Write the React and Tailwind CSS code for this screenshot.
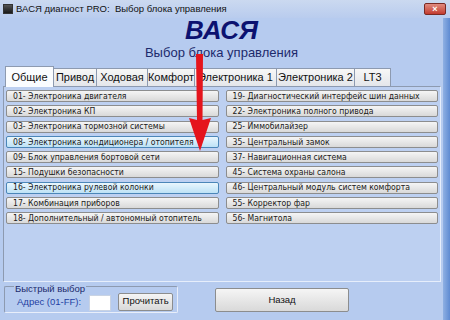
const leftRows = [
  { label: "01- Электроника двигателя" },
  { label: "02- Электроника КП" },
  { label: "03- Электроника тормозной системы" },
  { label: "08- Электроника кондиционера / отопителя", active: true },
  { label: "09- Блок управления бортовой сети" },
  { label: "15- Подушки безопасности" },
  { label: "16- Электроника рулевой колонки", active: true },
  { label: "17- Комбинация приборов" },
  { label: "18- Дополнительный / автономный отопитель" },
];

const rightRows = [
  { label: "19- Диагностический интерфейс шин данных" },
  { label: "22- Электроника полного привода" },
  { label: "25- Иммобилайзер" },
  { label: "35- Центральный замок" },
  { label: "37- Навигационная система" },
  { label: "45- Система охраны салона" },
  { label: "46- Центральный модуль систем комфорта" },
  { label: "55- Корректор фар" },
  { label: "56- Магнитола" },
];

const tabs = [
  { label: "Общие", w: "w-[49px]", active: true },
  { label: "Привод", w: "w-[43px]" },
  { label: "Ходовая", w: "w-[51px]" },
  { label: "Комфорт", w: "w-[47px]" },
  { label: "Электроника 1", w: "w-[82px]" },
  { label: "Электроника 2", w: "w-[78px]" },
  { label: "LT3", w: "w-[36px]" },
];

const RowButton = ({ label, active }) => (
  <div
    className={
      active
        ? "h-[12px] flex items-center pl-[6px] rounded-[2px] border border-[#4b86b8] bg-gradient-to-b from-[#e9f6fd] to-[#bde2f6] font-['DejaVu_Sans_Condensed','Liberation_Sans',sans-serif] text-[8.6px] leading-none text-[#1a1a1a] whitespace-nowrap overflow-hidden"
        : "h-[12px] flex items-center pl-[6px] rounded-[2px] border border-[#8c8d8e] bg-gradient-to-b from-[#f5f5f5] to-[#d9d9d9] font-['DejaVu_Sans_Condensed','Liberation_Sans',sans-serif] text-[8.6px] leading-none text-[#1a1a1a] whitespace-nowrap overflow-hidden"
    }
  >
    {label}
  </div>
);

export default function App() {
  return (
    <div className="w-[450px] h-[320px] relative overflow-hidden bg-[#b6cbef] font-['Liberation_Sans',sans-serif] flex flex-col">
      {/* title bar */}
      <div className="h-[18px] flex items-center pl-[3px] pr-[4px] bg-gradient-to-b from-[#cbd9f0] to-[#b9ccee]">
        <div className="w-[10px] h-[10px] bg-gradient-to-b from-[#555] to-[#1a1a1a] border border-[#333]" />
        <span className="ml-[3px] text-[9.5px] text-[#111] whitespace-pre">
          ВАСЯ диагност PRO:  Выбор блока управления
        </span>
        <div className="ml-auto w-[22px] h-[12px] rounded-[2px] border border-[#7a2a24] bg-gradient-to-b from-[#e08a80] to-[#c2392e] flex items-center justify-center text-white text-[9px] font-bold leading-none">
          ×
        </div>
      </div>

      <div className="flex flex-1">
        <div className="flex-1 flex flex-col">
          <div className="text-center text-[26px] leading-[24px] font-bold italic text-[#0c1270]">
            ВАСЯ
          </div>
          <div className="mt-[3px] text-center text-[13px] leading-[16px] text-[#1c2a6c]">
            Выбор блока управления
          </div>

          {/* tabs */}
          <div className="mt-[5px] h-[20px] flex items-end pl-[5px]">
            {tabs.map((t) =>
              t.active ? (
                <div
                  key={t.label}
                  className={`${t.w} h-[21px] -mb-px relative z-10 flex items-center justify-center bg-[#fafcff] border border-[#8d9ab0] border-b-0 text-[11px] text-[#111]`}
                >
                  {t.label}
                </div>
              ) : (
                <div
                  key={t.label}
                  className={`${t.w} h-[18px] flex items-center justify-center bg-gradient-to-b from-[#f7f7f7] to-[#e4e6ea] border border-[#8d9ab0] border-l-0 border-b-0 text-[11px] text-[#111] whitespace-nowrap`}
                >
                  {t.label}
                </div>
              )
            )}
          </div>

          {/* panel */}
          <div className="ml-[3px] w-[438px] h-[196px] border border-[#8d9ab0] border-b-[#e6eefb] border-r-[#e6eefb] bg-[#bdd0f1] pt-[3px] pl-[2px] pr-[2px]">
            <div className="grid grid-cols-2 gap-x-[7px]">
              <div className="flex flex-col gap-y-[3.3px]">
                {leftRows.map((r) => (
                  <RowButton key={r.label} {...r} />
                ))}
              </div>
              <div className="flex flex-col gap-y-[3.3px]">
                {rightRows.map((r) => (
                  <RowButton key={r.label} {...r} />
                ))}
              </div>
            </div>
          </div>

          {/* bottom */}
          <div className="flex items-start mt-[4px]">
            <div className="ml-[4px] w-[174px] h-[27px] relative border border-[#e8eefa] border-l-[#8d9ab0] border-t-[#8d9ab0] rounded-[2px] flex items-center">
              <span className="absolute left-[9px] -top-[4px] px-[1px] bg-[#b6cbef] text-[9.5px] leading-[12px] text-[#1c2a6c]">
                Быстрый выбор
              </span>
              <span className="ml-[12px] mt-[6px] text-[9.5px] text-[#1f3fa3]">Адрес (01-FF):</span>
              <div className="ml-[8px] mt-[6px] w-[22px] h-[16px] bg-white border border-[#c9d3e3]" />
              <div className="ml-[7px] mt-[4px] w-[55px] h-[18px] rounded-[2px] border border-[#8c8d8e] bg-gradient-to-b from-[#f5f5f5] to-[#d9d9d9] flex items-center justify-center text-[9.5px] text-[#111]">
                Прочитать
              </div>
            </div>
            <div className="ml-[37px] mt-[2px] w-[134px] h-[24px] rounded-[2px] border border-[#8c8d8e] bg-gradient-to-b from-[#f5f5f5] to-[#d9d9d9] flex items-center justify-center text-[9.5px] text-[#111]">
              Назад
            </div>
          </div>
        </div>
        {/* right window frame */}
        <div className="w-[7px] bg-gradient-to-r from-[#8fb0e3] to-[#5f8bd2]" />
      </div>

      {/* red arrow overlay */}
      <svg className="absolute left-[186px] top-[50px]" width="28" height="104" viewBox="0 0 28 104">
        <path d="M10 4 L17 4 L16.5 70 L25 68 L14 101 L3 68 L11 70 Z" fill="#e5141c" />
      </svg>
    </div>
  );
}
